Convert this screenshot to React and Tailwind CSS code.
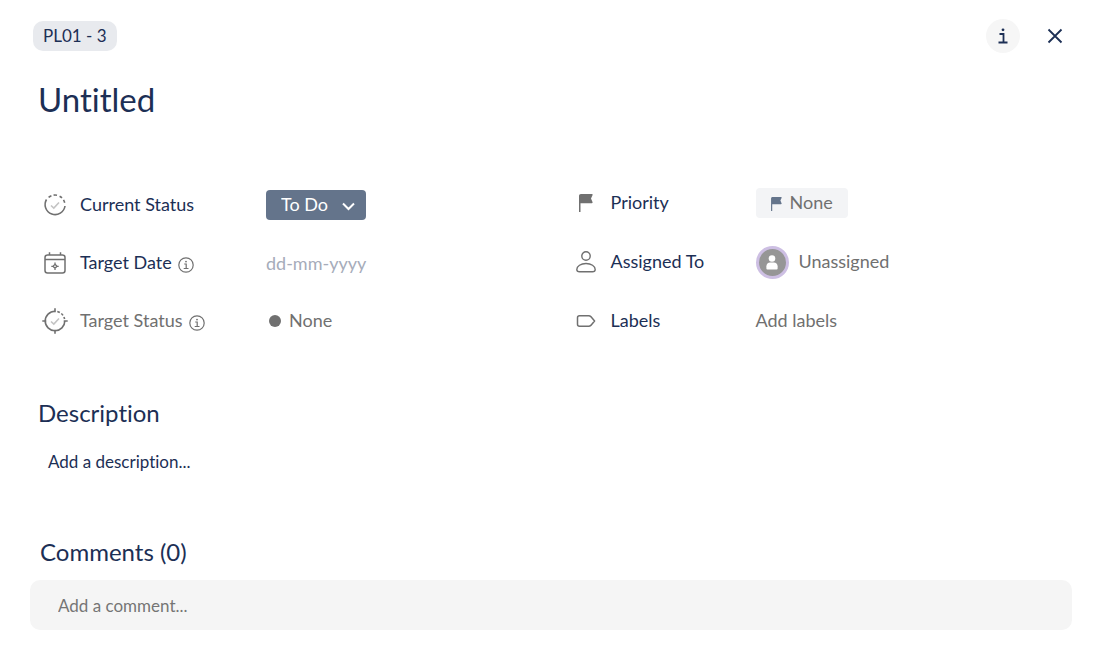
import { useState } from "react";

const StatusIcon = () => (
  <svg width="26" height="26" viewBox="0 0 26 26" fill="none" stroke="#707070" strokeWidth="1.6">
    <path d="M4.5 7.5A10 10 0 1 0 23 14" />
    <path d="M6.6 5.3A10 10 0 0 1 9.4 3.7M11.6 3.1A10 10 0 0 1 15 3.2M17.6 4.2A10 10 0 0 1 20 5.9M21.5 7.9A10 10 0 0 1 22.7 10.8" />
    <path d="M9 13.5l2.8 2.6 5.2-5.6" stroke="#c4c4c4" />
  </svg>
);

const CalendarIcon = () => (
  <svg width="26" height="26" viewBox="0 0 26 26" fill="none" stroke="#707070" strokeWidth="1.5">
    <rect x="3" y="5" width="20" height="18" rx="2.5" />
    <path d="M3 9.5h20M7.5 2.3V5M18.500 2.300V5" />
    <path d="M13 14.300l2 2-2 2-2-2zM13 12.600v1.700M13 18.300V20M9.300 16.300H11M15 16.300h1.700" strokeWidth="1.3" />
  </svg>
);

const TargetIcon = () => (
  <svg width="26" height="26" viewBox="0 0 26 26" fill="none" stroke="#707070" strokeWidth="1.6">
    <path d="M13 3.2A9.8 9.8 0 1 0 22.8 13" />
    <path d="M15.3 3.5A9.8 9.8 0 0 1 17.8 4.5M19.3 5.5A9.8 9.8 0 0 1 21 7.4M21.9 9A9.8 9.8 0 0 1 22.6 11" />
    <path d="M13 .3v4M13 21.7v4M.3 13h4M21.7 13h4" />
    <path d="M9 13.5l2.8 2.6 5.2-5.6" stroke="#c4c4c4" />
  </svg>
);

const InfoIcon = () => (
  <svg width="16" height="16" viewBox="0 0 16 16" fill="none" stroke="#707070" strokeWidth="1.2">
    <circle cx="8" cy="8" r="7.2" />
    <path d="M6.2 7h2v4.5M5.7 11.5h4.8" />
    <circle cx="8" cy="4.6" r=".9" fill="#707070" stroke="none" />
  </svg>
);

const FlagIcon = ({ className }) => (
  <svg className={className} viewBox="0 0 14 18" fill="currentColor">
    <path d="M0 18V2.2C0 .8.7 0 2 0h10.800c.700 0 1 .600.700 1.200L12 4.600l1.500 3.400c.300.700 0 1.200-.700 1.200H1.500V18z" />
  </svg>
);

const UserIcon = () => (
  <svg width="20" height="22" viewBox="0 0 20 22" fill="none" stroke="#707070" strokeWidth="1.4">
    <circle cx="10" cy="5" r="4.2" />
    <path d="M3.5 20.8h13c1.7 0 2.7-.9 2.7-2.3 0-3.4-4-6-9.2-6s-9.2 2.6-9.2 6c0 1.4 1 2.3 2.7 2.3z" />
  </svg>
);

const LabelIcon = () => (
  <svg width="20" height="12" viewBox="0 0 20 12" fill="none" stroke="#707070" strokeWidth="1.5" strokeLinejoin="round">
    <path d="M3.500.8h9.300c.8 0 1.500.3 2 .8L18.600 6l-3.800 4.400c-.5.500-1.200.8-2 .8H3.500c-1.200 0-2-.8-2-2V2.800c0-1.200.8-2 2-2z" />
  </svg>
);

const Avatar = () => (
  <span className="flex h-[33px] w-[33px] items-center justify-center rounded-full border-3 border-[#cdbfe3] bg-[#969696]">
    <svg width="12" height="15" viewBox="0 0 12 16" fill="#fff">
      <circle cx="6" cy="3.7" r="3.5" />
      <path d="M0 14.5V12c0-2.5 1.8-4 4-4h4c2.2 0 4 1.5 4 4v2.5c0 .6-.4 1-1 1H1c-.6 0-1-.4-1-1z" />
    </svg>
  </span>
);

const Field = ({ icon, label, htmlFor, info, muted, wide, children }) => (
  <div className="flex h-8 items-center">
    <span className={wide ? "mr-3 flex w-[26px] justify-center" : "mr-[15px] flex w-5 justify-center"}>
      {icon}
    </span>
    <div className={wide ? "flex w-[186px] items-center gap-[6px]" : "flex w-[145px] items-center"}>
      <label htmlFor={htmlFor} className={muted ? "pb-[2px] text-[#707070]" : "pb-[2px]"}>
        {label}
      </label>
      {info && (
        <button type="button" aria-label={`About ${label}`} className="mt-[3px]">
          <InfoIcon />
        </button>
      )}
    </div>
    {children}
  </div>
);

const App = () => {
  const [status, setStatus] = useState("To Do");
  const [date, setDate] = useState("");
  const [comment, setComment] = useState("");

  return (
    <main className="bg-white pt-[19px] pr-[25px] pb-[22px] pl-[30px] font-['Lato',sans-serif] text-[18px] leading-6 text-[#1c2f55] [font-variant-ligatures:none]">
      {/* Top bar */}
      <header className="flex items-center justify-between pr-2 pl-[3px]">
        <span className="flex h-[30px] items-center rounded-[10px] bg-[#e8eaee] px-[10px] pb-px text-[17px]">
          PL01 - 3
        </span>
        <div className="flex items-center gap-[26px]">
          <button type="button" aria-label="Info" className="flex h-[34px] w-[34px] items-center justify-center rounded-full bg-[#f6f6f6]">
            <svg width="10" height="16" viewBox="0 0 10 16" fill="none" stroke="currentColor" strokeWidth="1.8">
              <path d="M1.5 6h4v8.5M.5 14.500h9" />
              <circle cx="5" cy="1.8" r="1.4" fill="currentColor" stroke="none" />
            </svg>
          </button>
          <button type="button" aria-label="Close" className="flex h-[18px] w-[18px] items-center justify-center">
            <svg width="16" height="16" viewBox="0 0 16 16" fill="none" stroke="currentColor" strokeWidth="1.8">
              <path d="M1.5 1.5l13 13M14.5 1.5l-13 13" />
            </svg>
          </button>
        </div>
      </header>

      <h1 className="mt-6 pl-2 text-[33px] leading-[44px]">Untitled</h1>

      {/* Fields */}
      <div className="mt-[66px] grid grid-cols-2 gap-x-[25px]">
        <div className="flex flex-col gap-[26px] pt-[2px] pl-3">
          <Field wide icon={<StatusIcon />} label="Current Status" htmlFor="status">
            <div className="relative">
              <select
                id="status"
                value={status}
                onChange={(e) => setStatus(e.target.value)}
                className="block h-[30px] w-[100px] appearance-none rounded-[4px] bg-[#64748b] pb-[2px] pl-[15px] text-white"
              >
                <option>To Do</option>
                <option>Doing</option>
                <option>Done</option>
              </select>
              <svg className="pointer-events-none absolute top-3 right-[11px]" width="13" height="9" viewBox="0 0 13 9" fill="none" stroke="#fff" strokeWidth="2">
                <path d="M1 1.5L6.5 7 12 1.5" />
              </svg>
            </div>
          </Field>
          <Field wide info icon={<CalendarIcon />} label="Target Date" htmlFor="date">
            <input
              id="date"
              value={date}
              onChange={(e) => setDate(e.target.value)}
              placeholder="dd-mm-yyyy"
              className="w-32 outline-none placeholder:text-[#a6acba]"
            />
          </Field>
          <Field wide info muted icon={<TargetIcon />} label="Target Status" htmlFor="target">
            <button id="target" type="button" className="flex items-center gap-2 pl-[3px] text-[#707070]">
              <span className="h-3 w-3 rounded-full bg-[#707070]" />
              <span className="pb-[2px]">None</span>
            </button>
          </Field>
        </div>

        <div className="flex flex-col gap-[27px] pl-[12px]">
          <Field icon={<FlagIcon className="h-[18px] w-[14px] text-[#707070]" />} label="Priority" htmlFor="priority">
            <button id="priority" type="button" className="flex h-[30px] items-center gap-2 rounded-[4px] bg-[#f3f4f6] px-[15px] text-[#64748b]">
              <FlagIcon className="mt-[2px] h-[14px] w-[11px]" />
              <span className="pb-[2px] text-[#707070]">None</span>
            </button>
          </Field>
          <Field icon={<UserIcon />} label="Assigned To" htmlFor="assignee">
            <button id="assignee" type="button" className="flex items-center gap-[10px] text-[#707070]">
              <Avatar />
              <span className="pb-[2px]">Unassigned</span>
            </button>
          </Field>
          <Field icon={<LabelIcon />} label="Labels" htmlFor="labels">
            <button id="labels" type="button" className="pb-[2px] text-[#707070]">
              Add labels
            </button>
          </Field>
        </div>
      </div>

      {/* Description */}
      <h2 className="mt-[60px] pl-2 text-[24px] leading-8">Description</h2>
      <button type="button" className="mt-[21px] block pl-[18px] text-[17px]">
        Add a description...
      </button>

      {/* Comments */}
      <h2 className="mt-[62px] pl-[10px] text-[24px] leading-8">Comments (0)</h2>
      <input
        aria-label="Add a comment"
        value={comment}
        onChange={(e) => setComment(e.target.value)}
        placeholder="Add a comment..."
        className="mt-3 block h-[50px] w-full rounded-[10px] bg-[#f5f5f5] px-7 text-[17px] outline-none placeholder:text-[#757575]"
      />
    </main>
  );
};

export default App;
